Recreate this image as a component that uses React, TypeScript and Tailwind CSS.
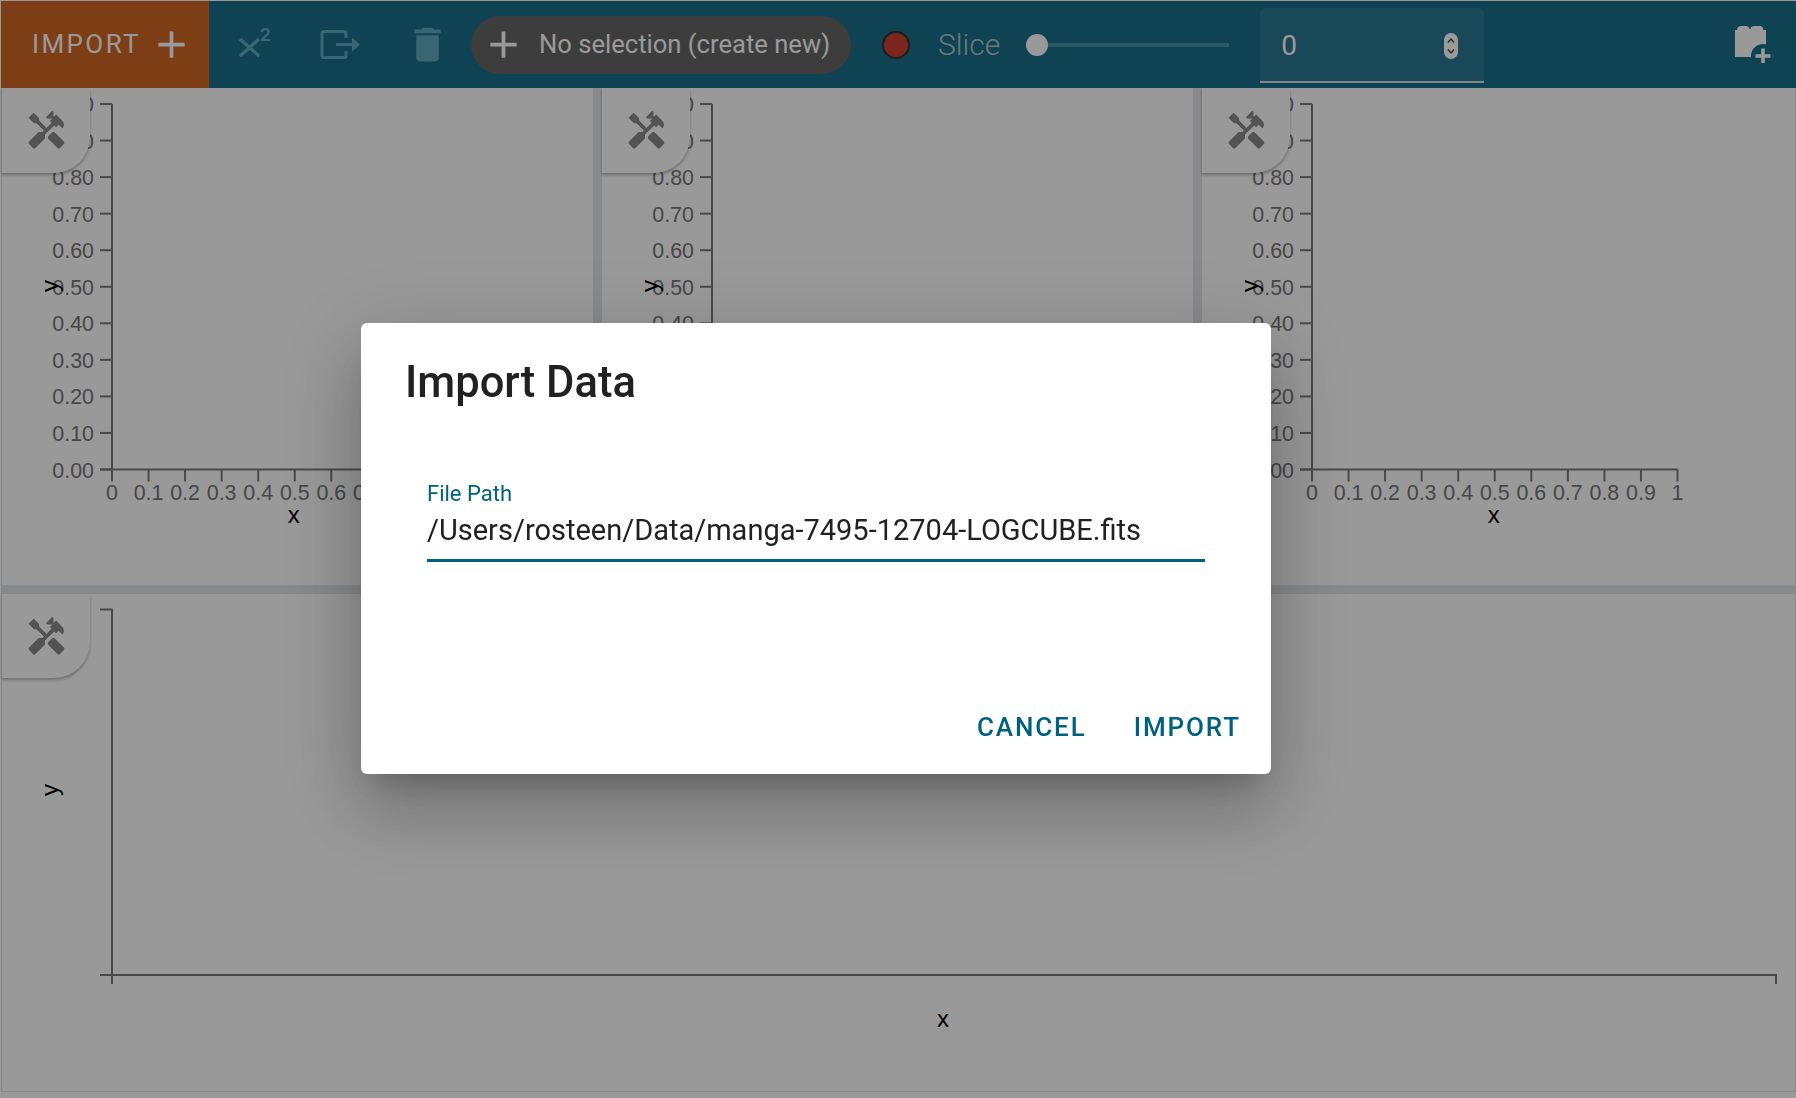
import { MdAdd, MdDelete, MdHandyman } from "react-icons/md";

const xTicks = ["0", "0.1", "0.2", "0.3", "0.4", "0.5", "0.6", "0.7", "0.8", "0.9", "1"];
const yTicks = ["1.00", "0.90", "0.80", "0.70", "0.60", "0.50", "0.40", "0.30", "0.20", "0.10", "0.00"];

const TopChart = () => {
  const x0 = 110;
  const yTop = 16;
  const yZero = 381.5;
  const stepX = 36.55;
  const stepY = 36.55;
  return (
    <svg className="block h-full w-full" style={{ fontFamily: "'Liberation Sans', sans-serif" }}>
      <path d={`M${x0} ${yTop}V${yZero}M${x0 - 12} ${yTop}H${x0}M${x0 - 12} ${yZero}H${x0 + 10 * stepX}`} stroke="#7a7a7a" strokeWidth="2" fill="none" />
      {yTicks.map((t, i) => {
        const y = yTop + i * stepY;
        return (
          <g key={t}>
            <line x1={x0 - 12} x2={x0} y1={y} y2={y} stroke="#7a7a7a" strokeWidth="2" />
            <text x={x0 - 18} y={y + 8} textAnchor="end" fontSize="21.4" fill="#777">{t}</text>
          </g>
        );
      })}
      {xTicks.map((t, i) => {
        const x = x0 + i * stepX;
        return (
          <g key={t}>
            <line x1={x} x2={x} y1={yZero} y2={yZero + 12} stroke="#7a7a7a" strokeWidth="2" />
            <text x={x} y={yZero + 30.5} textAnchor="middle" fontSize="21.4" fill="#777">{t}</text>
          </g>
        );
      })}
      <text x={x0 + 5 * stepX - 1} y={435} textAnchor="middle" fontSize="24" fill="#000">x</text>
      <text transform="translate(56 198) rotate(-90)" textAnchor="middle" fontSize="24" fill="#000">y</text>
    </svg>
  );
};

const BottomChart = () => (
  <svg className="block h-full w-full" style={{ fontFamily: "'Liberation Sans', sans-serif" }}>
    <path d="M98 15.5H110V381M98 381H1774V390M110 381V390" stroke="#7a7a7a" strokeWidth="2" fill="none" />
    <text x="941" y="433" textAnchor="middle" fontSize="24" fill="#000">x</text>
    <text transform="translate(56 196) rotate(-90)" textAnchor="middle" fontSize="24" fill="#000">y</text>
  </svg>
);

const ToolTab = ({ className }: { className: string }) => (
  <div className={`absolute left-0 top-0 flex w-[88px] items-center justify-center rounded-br-[36px] bg-white shadow-[0_2px_3px_rgba(0,0,0,0.28)] ${className}`}>
    <MdHandyman size={43} color="#8a8a8a" />
  </div>
);

const Panel = ({ className }: { className: string }) => (
  <div className={`relative h-full ${className}`}>
    <TopChart />
    <ToolTab className="h-[85px]" />
  </div>
);

const SuperscriptIcon = () => (
  <div className="relative h-[30px] w-[33px]">
    <svg width="23" height="21" viewBox="0 0 23 21" className="absolute bottom-0 left-0">
      <path d="M2 2l19 17M21 2L2 19" stroke="#62aac0" strokeWidth="3.4" fill="none" />
    </svg>
    <span className="absolute right-0 top-[-7px] font-['Roboto',sans-serif] text-[19px] font-bold text-[#62aac0]">2</span>
  </div>
);

const ExportIcon = () => (
  <svg width="40" height="29" viewBox="0 0 40 29" fill="none">
    <path d="M26 8V3.5a2 2 0 0 0-2-2H4a2 2 0 0 0-2 2v22a2 2 0 0 0 2 2h20a2 2 0 0 0 2-2V21" stroke="#62aac0" strokeWidth="3" />
    <path d="M16 14.5h17" stroke="#62aac0" strokeWidth="3" />
    <path d="M32 7.5l8 7-8 7z" fill="#62aac0" />
  </svg>
);

const BrickPlusIcon = () => (
  <svg width="38" height="37" viewBox="0 0 38 37">
    <path d="M1 31V4H3Q3.5 0 7 0H12Q15 0 15.5 3H16.5Q17 0 20 0H26Q29 0 29.5 4H32V31Z" fill="#fff" />
    <circle cx="29" cy="30" r="12" fill="#19718a" />
    <path d="M29 22.5V37.5M21.5 30H36.5" stroke="#fff" strokeWidth="3.6" />
  </svg>
);

const SpinnerIcon = () => (
  <div className="flex h-[26px] w-[14px] items-center justify-center rounded-full bg-white">
    <svg width="10" height="20" viewBox="0 0 10 20" fill="none">
      <path d="M2 6.5L5 3l3 3.5M2 13.5L5 17l3-3.5" stroke="#444" strokeWidth="1.4" />
    </svg>
  </div>
);

const Toolbar = () => (
  <div className="flex h-[87px] items-center bg-[#19718a] font-['Roboto',sans-serif]">
    <div className="flex h-full w-[208px] shrink-0 items-center bg-[#d06623] pl-[31px] text-white">
      <span className="text-[26px] tracking-[2.4px]">IMPORT</span>
      <MdAdd size={45} className="ml-[8px]" />
    </div>
    <div className="ml-[29px] mt-[-3px]"><SuperscriptIcon /></div>
    <div className="ml-[49px]"><ExportIcon /></div>
    <MdDelete size={45} color="#62aac0" className="ml-[45px]" />
    <div className="ml-[21px] flex h-[58px] w-[380px] shrink-0 items-center rounded-full bg-[#666] pl-[10px] text-white">
      <MdAdd size={45} />
      <span className="ml-[13px] text-[25.6px] whitespace-nowrap text-white">No selection (create new)</span>
    </div>
    <div className="ml-[31px] h-[28px] w-[28px] rounded-full border-2 border-[#333] bg-[#cc4133]" />
    <span className="ml-[28px] text-[30px] font-light text-[#b0c9d2]">Slice</span>
    <div className="ml-[26px] flex items-center">
      <div className="h-[22px] w-[22px] rounded-full bg-white" />
      <div className="h-[4px] w-[181px] bg-[#4b96ad]" />
    </div>
    <div className="ml-[31px] mb-[5px] flex h-[75px] w-[224px] items-center justify-between self-end rounded-t-[6px] border-b-2 border-[#d8e4e8] bg-[#2b7893] pl-[21px] pr-[26px] pt-[2px] text-[28px] text-white">
      <span>0</span>
      <SpinnerIcon />
    </div>
    <div className="ml-auto mr-[24px]"><BrickPlusIcon /></div>
  </div>
);

const ImportDialog = () => (
  <div className="fixed inset-0 flex items-center justify-center bg-black/40 pb-[1px] pr-[164px] font-['Roboto',sans-serif]">
    <div className="flex h-[451px] w-[910px] flex-col rounded-[6px] bg-white shadow-[0_20px_28px_-13px_rgba(0,0,0,0.2),0_45px_70px_6px_rgba(0,0,0,0.14),0_17px_86px_15px_rgba(0,0,0,0.12)]">
      <h2 className="pl-[44px] pt-[33px] text-[43.5px] leading-[54px] font-medium text-[#212121]">Import Data</h2>
      <div className="mx-[66px] mt-[71px] border-b-[3px] border-[#00617e]">
        <div className="text-[22px] leading-[26px] text-[#00617e]">File Path</div>
        <div className="mt-[3px] pb-[9px] text-[29px] leading-[40px] whitespace-nowrap text-[#212121]">/Users/rosteen/Data/manga-7495-12704-LOGCUBE.fits</div>
      </div>
      <div className="mt-auto flex justify-end gap-[47px] pb-[30px] pr-[30px] text-[26px] leading-[34px] font-medium tracking-[1.9px] text-[#00617e]">
        <span>CANCEL</span>
        <span>IMPORT</span>
      </div>
    </div>
  </div>
);

export default function App() {
  return (
    <div className="relative h-[1098px] w-[1796px] overflow-hidden bg-white pl-px pt-px">
      <Toolbar />
      <div className="border-x border-b border-[#e4e4e4]">
        <div className="flex h-[497px]">
          <Panel className="w-[591px]" />
          <div className="w-[9px] bg-[#e3e5e8]" />
          <Panel className="w-[591px]" />
          <div className="w-[9px] bg-[#e3e5e8]" />
          <Panel className="flex-1" />
        </div>
        <div className="h-[9px] bg-[#e3e5e8]" />
        <div className="relative h-[497px]">
          <BottomChart />
          <ToolTab className="h-[84px]" />
        </div>
      </div>
      <ImportDialog />
    </div>
  );
}
